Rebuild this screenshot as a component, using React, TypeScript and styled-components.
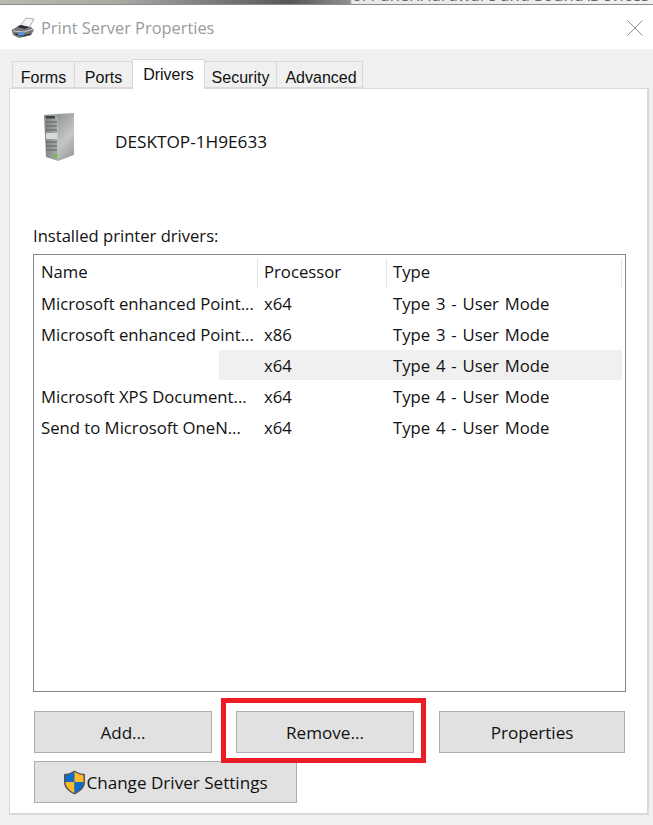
import styled, { createGlobalStyle } from "styled-components";

const GlobalStyle = createGlobalStyle`
  html, body {
    margin: 0;
    padding: 0;
    background: #f0f0f0;
  }
  * {
    box-sizing: border-box;
  }
`;

const Page = styled.div`
  position: relative;
  width: 653px;
  height: 825px;
  overflow: hidden;
  background: #f0f0f0;
  font-family: "Open Sans", "Noto Sans", sans-serif;
  color: #111;
`;

const TopStrip = styled.div`
  height: 5px;
  overflow: hidden;
  border-bottom: 1px solid #8a8a8a;
  background: linear-gradient(90deg, #b9b9b4 0, #a9a9a4 120px, #55585a 290px, #8e8f8f 350px, #e8e8e8 352px, #f1f1f1 100%);
  display: flex;
  justify-content: flex-end;
`;

const PathText = styled.div`
  width: 301px;
  margin-top: -13px;
  font-size: 16.6px;
  line-height: 16px;
  white-space: nowrap;
  color: #666;
`;

const TitleBar = styled.div`
  height: 44px;
  background: #fff;
  display: flex;
  align-items: center;
  padding: 1px 10px 0 11px;
`;

const TitleText = styled.div`
  margin-left: 6px;
  flex: 1;
  font-size: 16.4px;
  color: #9a9a9a;
`;

const TabRow = styled.div`
  height: 39px;
  padding: 10px 0 0 12px;
  display: flex;
  align-items: flex-end;
`;

const Tab = styled.div<{ $active?: boolean; $width: number; $nudge?: number }>`
  width: ${(p) => p.$width}px;
  height: ${(p) => (p.$active ? 30 : 27)}px;
  margin-bottom: ${(p) => (p.$active ? -1 : 0)}px;
  position: relative;
  z-index: ${(p) => (p.$active ? 2 : 1)};
  display: flex;
  justify-content: center;
  padding: ${(p) => (p.$active ? 6 : 7)}px 0 0 ${(p) => p.$nudge ?? 0}px;
  background: ${(p) => (p.$active ? "#fff" : "#f0f0f0")};
  border: 1px solid #d9d9d9;
  border-bottom: ${(p) => (p.$active ? "none" : "1px solid #d9d9d9")};
  margin-right: -1px;
  font-family: "Liberation Sans", Arial, sans-serif;
  font-size: 16px;
  line-height: 18px;
  color: #111;
`;

const Panel = styled.div`
  width: 640px;
  height: 727px;
  margin-left: 9px;
  background: #fff;
  border: 1px solid #d9d9d9;
  border-width: 1px 2px 2px 1px;
  padding: 0 22px 0 23px;
`;

const ServerRow = styled.div`
  height: 136px;
  padding: 23px 0 0 10px;
  display: flex;
  align-items: flex-start;
`;

const ServerName = styled.div`
  margin: 19px 0 0 40px;
  font-size: 17.2px;
  line-height: 22px;
`;

const ListLabel = styled.div`
  font-size: 16.6px;
  line-height: 22px;
  height: 29px;
`;

const ListBox = styled.div`
  width: 593px;
  height: 438px;
  border: 1px solid #85858b;
  padding: 3px 3px 0 5px;
`;

const Columns = styled.div`
  display: grid;
  grid-template-columns: 219px 129px 235px;
`;

const HeaderCell = styled.div<{ $first?: boolean }>`
  height: 31px;
  padding: 3px 0 0 ${(p) => (p.$first ? 2 : 6)}px;
  border-right: 1px solid #e5e5e5;
  font-size: 16.7px;
  line-height: 22px;
`;

const Row = styled(Columns)<{ $selected?: boolean }>`
  height: ${(p) => (p.$selected ? 30 : 31)}px;
  margin: ${(p) => (p.$selected ? "-1px 0 2px" : "0")};
  background: ${(p) => (p.$selected ? "#f0f0f0" : "transparent")};
`;

const Cell = styled.div<{ $first?: boolean; $selected?: boolean; $spaced?: boolean }>`
  padding: ${(p) => (p.$selected ? 5 : 4)}px 0 0 ${(p) => (p.$first ? 2 : 6)}px;
  font-size: 16.7px;
  line-height: 22px;
  word-spacing: ${(p) => (p.$spaced ? 1.5 : 0)}px;
  white-space: nowrap;
  overflow: hidden;
`;

const MaskedName = styled.div`
  width: 180px;
  height: 30px;
  background: #fff;
`;

const ButtonRow = styled.div`
  margin-top: 19px;
  display: flex;
`;

const ActionButton = styled.div<{ $width: number; $gap?: number }>`
  width: ${(p) => p.$width}px;
  height: 42px;
  margin-left: ${(p) => p.$gap ?? 0}px;
  background: #e1e1e1;
  border: 1px solid #adadad;
  display: flex;
  align-items: center;
  justify-content: center;
  font-size: 17.1px;
  color: #111;
`;

const SecondRow = styled.div`
  margin-top: 8px;
  display: flex;
`;

const RedBox = styled.div`
  position: absolute;
  left: 221px;
  top: 698px;
  width: 205px;
  height: 65px;
  border: 5px solid #ed1c24;
`;

const drivers = [
  { name: "Microsoft enhanced Point...", cpu: "x64", type: "Type 3 - User Mode" },
  { name: "Microsoft enhanced Point...", cpu: "x86", type: "Type 3 - User Mode" },
  { name: "", cpu: "x64", type: "Type 4 - User Mode", selected: true },
  { name: "Microsoft XPS Document...", cpu: "x64", type: "Type 4 - User Mode" },
  { name: "Send to Microsoft OneN...", cpu: "x64", type: "Type 4 - User Mode" },
];

const PrinterIcon = () => (
  <svg width="24" height="22" viewBox="0 0 24 22">
    <path d="M9 9 L15 1 L23 2 L18 11 Z" fill="#f4f4f4" stroke="#9a9a9a" strokeWidth="0.8" />
    <path d="M0.5 13 L9 8 L20 10 L23 13 L20 18 L8 21 L2 18 Z" fill="#77797c" />
    <path d="M6 10 L10 8 L18 10 L14 12 Z" fill="#2b2d30" />
    <path d="M2 14 L13 15 L22 12" fill="none" stroke="#c9cbcd" strokeWidth="1" />
    <path d="M4 17 L12 19 L20 17" fill="none" stroke="#34373a" strokeWidth="1.5" />
    <rect x="7" y="15.5" width="6" height="3" fill="#4f94d6" />
  </svg>
);

const ServerIcon = () => (
  <svg width="32" height="50" viewBox="0 0 32 50">
    <defs>
      <linearGradient id="sideFace" x1="0" y1="0" x2="0.4" y2="1">
        <stop offset="0" stopColor="#8f9493" />
        <stop offset="0.65" stopColor="#c4c7c6" />
        <stop offset="1" stopColor="#a2a6a5" />
      </linearGradient>
      <linearGradient id="frontFace" x1="0" y1="0" x2="1" y2="0">
        <stop offset="0" stopColor="#7f8584" />
        <stop offset="1" stopColor="#a9adac" />
      </linearGradient>
    </defs>
    <path d="M14 2 L31 1 L31 43 L15 49 Z" fill="url(#sideFace)" />
    <path d="M1 3 L14 2 L15 49 L3 45 Z" fill="url(#frontFace)" />
    <rect x="3" y="4" width="9" height="2.5" fill="#3f4547" />
    <path d="M3 10 H14 M3 14 H14 M3 18 H14 M3 30 H14 M3 34 H14 M3 38 H14" stroke="#596060" strokeWidth="1" />
    <rect x="3" y="21" width="11" height="6" fill="#d5dad9" />
    <rect x="11" y="42" width="3" height="3" fill="#6fc23c" />
  </svg>
);

const CloseIcon = () => (
  <svg width="16" height="16" viewBox="0 0 16 16">
    <path d="M0.5 0.5 L15.5 15.5 M15.5 0.5 L0.5 15.5" stroke="#8e8e8e" strokeWidth="1" fill="none" />
  </svg>
);

const ShieldIcon = () => (
  <svg width="23" height="25" viewBox="0 0 23 25">
    <path d="M11.5 0.5 C8 3 4 4 1 4 L1 12 C1 18 6 22 11.5 24.5 C17 22 22 18 22 12 L22 4 C19 4 15 3 11.5 0.5 Z" fill="#555" />
    <path d="M11.5 2 C8.5 4 5 5 2.5 5.2 L2.5 12 L11.5 12 Z" fill="#0f6cc9" />
    <path d="M11.5 2 C14.5 4 18 5 20.5 5.2 L20.5 12 L11.5 12 Z" fill="#fdb92c" />
    <path d="M2.5 12 L11.5 12 L11.5 23 C7 21 2.8 17.5 2.5 12 Z" fill="#fdb92c" />
    <path d="M20.5 12 L11.5 12 L11.5 23 C16 21 20.2 17.5 20.5 12 Z" fill="#0f6cc9" />
  </svg>
);

const tabs = [
  { label: "Forms", width: 63 },
  { label: "Ports", width: 59 },
  { label: "Drivers", width: 73, active: true },
  { label: "Security", width: 73 },
  { label: "Advanced", width: 87, nudge: 3 },
];

const App = () => (
  <Page>
    <GlobalStyle />
    <TopStrip>
      <PathText>ol Panel\Hardware and Sound\Devices</PathText>
    </TopStrip>
    <TitleBar>
      <PrinterIcon />
      <TitleText>Print Server Properties</TitleText>
      <CloseIcon />
    </TitleBar>
    <TabRow>
      {tabs.map((t) => (
        <Tab key={t.label} $width={t.width} $active={t.active} $nudge={t.nudge}>
          {t.label}
        </Tab>
      ))}
    </TabRow>
    <Panel>
      <ServerRow>
        <ServerIcon />
        <ServerName>DESKTOP-1H9E633</ServerName>
      </ServerRow>
      <ListLabel>Installed printer drivers:</ListLabel>
      <ListBox>
        <Columns>
          <HeaderCell $first>Name</HeaderCell>
          <HeaderCell>Processor</HeaderCell>
          <HeaderCell>Type</HeaderCell>
        </Columns>
        {drivers.map((d, i) => (
          <Row key={i} $selected={d.selected}>
            {d.selected ? <MaskedName /> : <Cell $first>{d.name}</Cell>}
            <Cell $selected={d.selected}>{d.cpu}</Cell>
            <Cell $selected={d.selected} $spaced>{d.type}</Cell>
          </Row>
        ))}
      </ListBox>
      <ButtonRow>
        <ActionButton $width={178} $gap={1}>Add...</ActionButton>
        <ActionButton $width={178} $gap={24}>Remove...</ActionButton>
        <ActionButton $width={186} $gap={25}>Properties</ActionButton>
      </ButtonRow>
      <SecondRow>
        <ActionButton $width={263} $gap={1}>
          <ShieldIcon />
          Change Driver Settings
        </ActionButton>
      </SecondRow>
    </Panel>
    <RedBox />
  </Page>
);

export default App;
